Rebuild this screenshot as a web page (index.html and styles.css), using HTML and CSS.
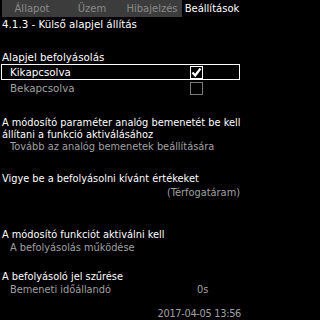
FILE: index.html
```html
<!DOCTYPE html>
<html>
<head>
<meta charset="utf-8">
<link rel="stylesheet" href="styles.css">
</head>
<body>
<div class="screen">
  <div class="tabs">
    <div class="tab">Állapot</div>
    <div class="tab">Üzem</div>
    <div class="tab">Hibajelzés</div>
    <div class="tab active">Beállítások</div>
  </div>
  <div class="title">4.1.3 - Külső alapjel állítás</div>

  <div class="heading h-first">Alapjel befolyásolás</div>
  <div class="option selected">
    <span class="label">Kikapcsolva</span>
    <span class="check on"><svg width="11" height="11" viewBox="0 0 11 11"><path d="M1.5 5.5 L4.2 8.5 L9.5 1.5" fill="none" stroke="#fff" stroke-width="2.2"/></svg></span>
  </div>
  <div class="option">
    <span class="label dim">Bekapcsolva</span>
    <span class="check off"></span>
  </div>

  <div class="para">
    <div>A módosító paraméter analóg bemenetét be kell</div>
    <div>állítani a funkció aktiválásához</div>
    <div class="sub dim">Tovább az analóg bemenetek beállítására</div>
  </div>

  <div class="heading h-vigye">Vigye be a befolyásolni kívánt értékeket</div>
  <div class="right dim">(Térfogatáram)</div>

  <div class="heading h-mod">A módosító funkciót aktiválni kell</div>
  <div class="sub dim">A befolyásolás működése</div>

  <div class="heading h-jel">A befolyásoló jel szűrése</div>
  <div class="valrow dim">
    <span class="label">Bemeneti időállandó</span>
    <span class="value">0s</span>
  </div>

  <div class="date dim">2017-04-05 13:56</div>
</div>
</body>
</html>
```
FILE: styles.css
```css
html, body {
  margin: 0;
  padding: 0;
  background: #000;
}
.screen {
  width: 242px;
  height: 320px;
  display: flex;
  flex-direction: column;
  background: #000;
  color: #fff;
  font-family: "DejaVu Sans", sans-serif;
  font-size: 9.8px;
  line-height: 13px;
  white-space: nowrap;
  overflow: hidden;
}
.tabs {
  display: grid;
  grid-template-columns: repeat(4, 1fr);
  height: 17px;
  margin-left: 2px;
  background: #3c3c3c;
  flex-shrink: 0;
}
.tab {
  color: #8a8a8a;
  text-align: center;
  line-height: 17px;
  font-size: 10px;
}
.tab.active {
  background: #000;
  color: #fff;
}
.title {
  padding-left: 2px;
  margin-top: 1px;
  font-size: 10.3px;
}
.heading {
  padding-left: 2px;
}
.h-first { margin-top: 20px; font-size: 10.3px; }
.dim { color: #a0a0a0; }
.option {
  display: flex;
  align-items: center;
  height: 14px;
  margin: 0 2px 0 1px;
  padding: 0 36px 0 8px;
  border: 1px solid transparent;
  flex-shrink: 0;
  font-size: 10.3px;
}
.option.selected {
  border-color: #fff;
}
.option .label { flex: 1; }
.check {
  width: 11px;
  height: 11px;
  display: flex;
  align-items: center;
  justify-content: center;
}
.check.on { border: 1px solid #fff; }
.check.off { border: 1px solid #7a7a7a; }
.para {
  margin-top: 21px;
  padding-left: 2px;
  line-height: 12px;
}
.para .sub { padding-left: 8px; }
.sub { padding-left: 10px; }
.h-vigye { margin-top: 19px; }
.right {
  text-align: right;
  padding-right: 2px;
  margin-top: 1px;
}
.h-mod { margin-top: 29px; }
.h-jel { margin-top: 16px; }
.valrow {
  display: flex;
  padding-left: 10px;
}
.valrow .label { width: 187px; }
.date {
  margin-top: auto;
  text-align: right;
  padding-right: 1px;
  line-height: 12px;
  letter-spacing: -0.3px;
}
```
